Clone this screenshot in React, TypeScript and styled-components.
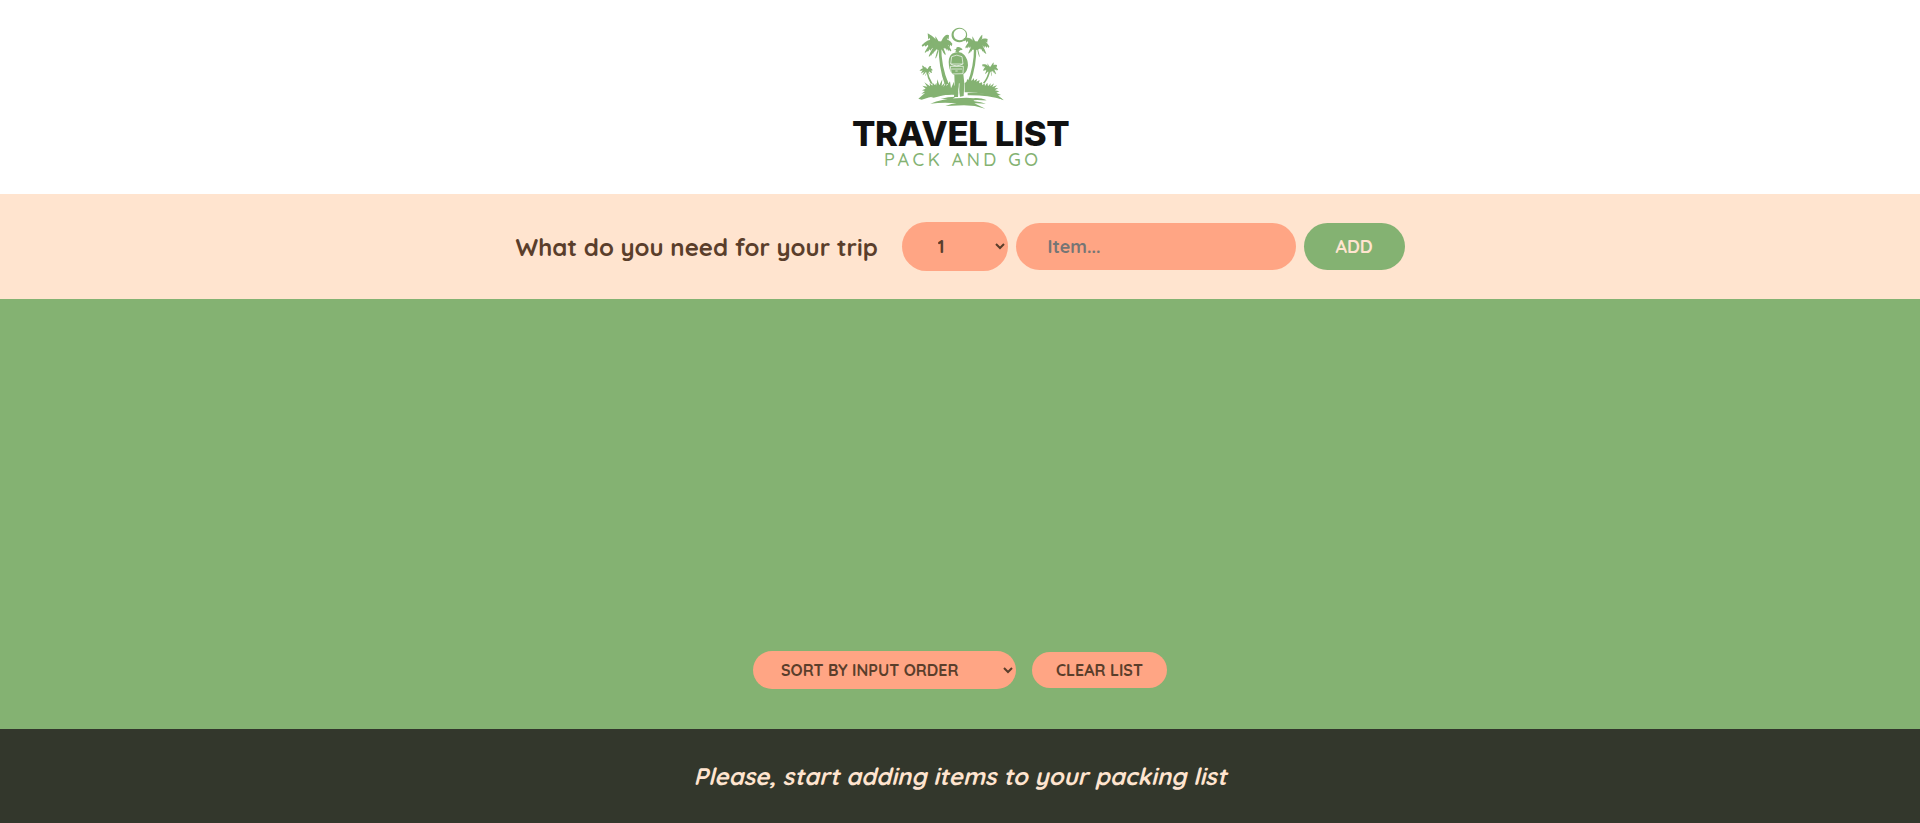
import React from "react";
import styled, { createGlobalStyle } from "styled-components";

const color = {
  green: "#84b272",
  coral: "#ffa584",
  peach: "#ffe4cf",
  brown: "#5a3e2b",
  dark: "#33372c",
};

const GlobalStyle = createGlobalStyle`
  * { margin: 0; padding: 0; box-sizing: border-box; }
  body { font-family: Quicksand, Lato, "Open Sans", sans-serif; color: ${color.brown}; background: #fff; }
`;

const Page = styled.div`
  display: grid;
  grid-template-rows: 194px 105px 1fr 94px;
  width: 100%;
  height: 100vh;
`;

const Header = styled.header`
  display: flex;
  justify-content: center;
  padding-top: 10px;
  background: #fff;
`;

const Form = styled.form`
  display: flex;
  align-items: center;
  justify-content: center;
  gap: 8px;
  background: ${color.peach};
  padding-bottom: 1px;
`;

const Question = styled.h3`
  width: 362px;
  margin-right: 16px;
  padding-top: 2px;
  font-size: 24px;
  font-weight: 700;
  line-height: 30px;
  white-space: nowrap;
`;

const Select = styled.select<{ $compact?: boolean }>`
  width: ${(p) => (p.$compact ? "263px" : "106px")};
  height: ${(p) => (p.$compact ? "38px" : "49px")};
  padding: 0 ${(p) => (p.$compact ? "24px" : "32px")};
  border: none;
  border-radius: ${(p) => (p.$compact ? "19px" : "24.5px")};
  background-color: ${color.coral};
  color: ${color.brown};
  font-family: inherit;
  font-size: ${(p) => (p.$compact ? "16px" : "18px")};
  font-weight: 700;
`;

const Input = styled.input`
  width: 280px;
  height: 47px;
  padding: 0 32px;
  border: none;
  border-radius: 23.5px;
  background: ${color.coral};
  color: ${color.brown};
  font-family: inherit;
  font-size: 18px;
  font-weight: 700;

  &::placeholder {
    color: #757575;
  }
`;

const Button = styled.button<{ $primary?: boolean }>`
  width: ${(p) => (p.$primary ? "101px" : "135px")};
  height: ${(p) => (p.$primary ? "47px" : "36px")};
  border: none;
  border-radius: 24px;
  background: ${(p) => (p.$primary ? color.green : color.coral)};
  color: ${(p) => (p.$primary ? color.peach : color.brown)};
  font-family: inherit;
  font-size: ${(p) => (p.$primary ? "18px" : "16px")};
  font-weight: 700;
  white-space: nowrap;
`;

const List = styled.main`
  display: flex;
  align-items: flex-end;
  justify-content: center;
  padding-bottom: 40px;
  background: ${color.green};
`;

const Actions = styled.div`
  display: flex;
  align-items: center;
  gap: 16px;
`;

const Footer = styled.footer`
  display: flex;
  align-items: center;
  justify-content: center;
  background: ${color.dark};
  color: ${color.peach};
  font-size: 24px;
  font-style: italic;
  font-weight: 700;
  line-height: 30px;
  white-space: nowrap;
`;

/* One frond: a tapered curved rib with leaflets hanging from it. */
function frond(dx: number, dy: number, lift: number, leaf: number) {
  const at = (t: number) => [dx * t, dy * t - lift * 4 * t * (1 - t)];
  let upper = "M0 0";
  const lower: string[] = [];
  const n = 6;
  for (let i = 1; i <= n; i++) {
    const [x, y] = at(i / n);
    upper += `L${x.toFixed(1)} ${y.toFixed(1)}`;
  }
  for (let i = n - 1; i >= 1; i--) {
    const [x, y] = at(i / n);
    const len = leaf * Math.sin((Math.PI * i) / n);
    lower.push(
      `L${(x + dx * 0.12).toFixed(1)} ${(y + len + 5).toFixed(1)}L${x.toFixed(1)} ${(y + len * 0.6 + 4).toFixed(1)}`
    );
  }
  return upper + lower.join("") + "Z";
}

const fronds = [
  [-55, 3, 15, 16],
  [-46, 24, 18, 20],
  [-34, 36, 12, 18],
  [-14, 40, 4, 14],
  [-37, -33, 4, 20],
  [-14, -24, 2, 18],
  [27, -27, 11, 19],
  [37, -2, 13, 20],
  [34, 18, 13, 18],
  [17, 29, 6, 14],
];

const wideFronds = [
  [-38, -18, 9, 12],
  [-33, 8, 14, 17],
  [-24, 26, 10, 14],
  [-12, -24, 2, 16],
  [18, -29, 4, 17],
  [34, -16, 8, 18],
  [39, 6, 15, 18],
  [30, 28, 14, 17],
  [10, 36, 4, 12],
];

function Palm({ x, y, scale = 1, flip = 1, shape = fronds }: { x: number; y: number; scale?: number; flip?: number; shape?: number[][] }) {
  return (
    <g transform={`translate(${x} ${y}) scale(${scale * flip} ${scale})`}>
      {shape.map(([dx, dy, lift, leaf], i) => (
        <path key={i} d={frond(dx, dy, lift, leaf)} />
      ))}
      <ellipse cx="-2" cy="4" rx="17" ry="13" />
    </g>
  );
}

function Logo() {
  return (
    <svg width="240" height="170" viewBox="0 0 720 510" role="img" aria-label="Travel list">
      <g fill={color.green}>
        <path fillRule="evenodd" d="M358 53a23.500 22 0 1 0 .1 0ZM359.500 56a18.500 17.500 0 1 1-.1 0Z" />
        <Palm x={300} y={103} />
        <Palm x={409} y={103} shape={wideFronds} />
        <Palm x={262} y={180} scale={0.42} />
        <Palm x={450} y={175} scale={0.62} shape={wideFronds} />
        <path d="M296 110q0 62 18 112h12q-23-55-22-112Z" />
        <path d="M402 110q0 61-20 108h9q19-51 18-108Z" />
        <path d="M259 184q3 22 13 37h6q-12-19-15-37ZM447 177q-4 26-19 43h6q14-17 18-43Z" />

        <path d="M235 266l20-17-11 2 11-8-9-2 11-5-10-9 15 3-9-13 17 12-1-9 8 7 1-9 7 8 4-8 1 10 2-20 6 18 9-18-2 20 10-11-5 15 13-21-4 18 11-15 3 21 9-20 1 12 11-4v32q-61-3-109 14Z" />
        <path d="M374 246v-27l5-3 3-9 4 5 4-8 5 8 7-8v8l10-6-3 9 10-5-2 10 9-3 1 9 7-6 1 8 7-10 2 11 8-9-1 9 11-9-5 11 14-5-8 9 12-1-10 7 13 3-9 4 14 7-9 1 17 15q-52-25-117-24Z" />

        <path d="M339 119q11 1 11-7 6-3 13 2l5 4q-1 3-8 3l-5 6-9-2 2-5Z" />
        <path d="M336 131q24-12 37 4 11 13 11 31-2 20-14 27l3 27-2 38-11 2-4-29-2 30h-12l2-38-1-28q-13-4-16-27-4-26 9-37Z" />
        <path d="M271 281Q305 267 348 265Q400 260 440 271L412 270Q394 271 404 274Q424 276 438 281Q414 279 403 280L436 296Q405 286 372 286L316 288Q336 281 350 280Q312 276 271 281Z" />
        <path d="M270 260q30-9 69-9-35 5-58 12ZM383 249q69-5 108 20-50-14-108-13ZM241 264q21-10 45-11-23 6-37 13ZM302 267q22-7 44-7l-8 7ZM400 264q24-1 41 7l-30-1Z" />
      </g>
      <g fill="none" stroke="#fff" strokeWidth="2">
        <path d="M335 140q15-9 31 0l3 22h-37ZM332 162q18 11 36 0M331 169h39l-1 22-35 1ZM334 177h32M346 183h7M358 220l-2 27" />
      </g>
      <text x="36" y="409" fill="#111" fontFamily="Inter, Liberation Sans, sans-serif" fontWeight="800" fontSize="104" textLength="653" lengthAdjust="spacing">
        TRAVEL LIST
      </text>
      <text x="132" y="467" fill={color.green} fontFamily="Quicksand, Lato, sans-serif" fontWeight="500" fontSize="54" textLength="462" lengthAdjust="spacing">
        PACK AND GO
      </text>
    </svg>
  );
}

export default function App() {
  return (
    <>
      <GlobalStyle />
      <Page>
        <Header>
          <Logo />
        </Header>
        <Form onSubmit={(e) => e.preventDefault()}>
          <Question>What do you need for your trip</Question>
          <Select defaultValue="1">
            {Array.from({ length: 20 }, (_, i) => (
              <option key={i} value={i + 1}>{i + 1}</option>
            ))}
          </Select>
          <Input type="text" placeholder="Item..." />
          <Button $primary>ADD</Button>
        </Form>
        <List>
          <Actions>
            <Select $compact defaultValue="input">
              <option value="input">SORT BY INPUT ORDER</option>
              <option value="description">SORT BY DESCRIPTION</option>
              <option value="packed">SORT BY PACKED STATUS</option>
            </Select>
            <Button>CLEAR LIST</Button>
          </Actions>
        </List>
        <Footer>Please, start adding items to your packing list</Footer>
      </Page>
    </>
  );
}
